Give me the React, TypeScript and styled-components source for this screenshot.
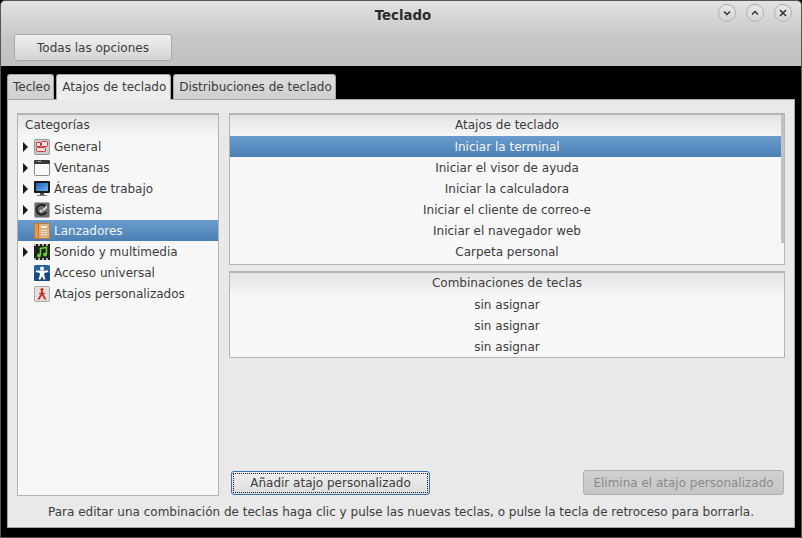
import React from 'react';
import styled, { createGlobalStyle } from 'styled-components';

const Global = createGlobalStyle`
  html, body { margin: 0; padding: 0; background: #000; }
  body { font-family: "DejaVu Sans", sans-serif; font-size: 12px; color: #3c3c3c; }
`;

const Win = styled.div`
  width: 802px;
  height: 538px;
  box-sizing: border-box;
  display: flex;
  flex-direction: column;
  background: #000;
  border: 1px solid #555;
  border-bottom-color: #4a4a4a;
  border-radius: 5px 5px 0 0;
  overflow: hidden;
`;

const Head = styled.div`
  height: 65px;
  flex: none;
  background: linear-gradient(#e2e2e2, #c6c6c6 60%, #c0c0c0);
  display: flex;
  flex-direction: column;
`;

const TitleBar = styled.div`
  height: 33px;
  position: relative;
  display: flex;
  align-items: center;
  justify-content: center;
`;

const Title = styled.div`
  font-weight: bold;
  font-size: 13.3px;
  color: #2c2c2c;
  margin: -4px 0 0 4px;
`;

const WinButtons = styled.div`
  position: absolute;
  right: 9px;
  top: 3px;
  display: flex;
  gap: 10px;
`;

const WinButton = styled.div`
  width: 16px;
  height: 16px;
  border-radius: 50%;
  border: 1px solid #b0b0b0;
  background: linear-gradient(#e8e8e8, #d4d4d4);
  box-shadow: 0 0 0 1px #d8d8d8;
  display: flex;
  align-items: center;
  justify-content: center;
`;

const Toolbar = styled.div`
  padding: 0 13px 0;
`;

const TopButton = styled.div`
  width: 158px;
  height: 27px;
  box-sizing: border-box;
  border: 1px solid #a8a8a8;
  border-radius: 3px;
  background: linear-gradient(#f0f0f0, #d4d4d4);
  display: flex;
  align-items: center;
  justify-content: center;
`;

const Body = styled.div`
  flex: 1;
  padding: 8px 6px 9px 6px;
  display: flex;
  flex-direction: column;
  min-height: 0;
`;

const Tabs = styled.div`
  display: flex;
  height: 25px;
  flex: none;
  gap: 2px;
`;

const Tab = styled.div<{ $on?: boolean }>`
  box-sizing: border-box;
  height: 25px;
  padding: 0 ${p => (p.$on ? '4px' : '3px')} 1px 5px;
  display: flex;
  align-items: center;
  border: 1px solid #a5a5a5;
  border-bottom: none;
  border-radius: 3px 3px 0 0;
  background: ${p => (p.$on ? '#ececec' : 'linear-gradient(#dedede, #cfcfcf)')};
  ${p => p.$on && 'position: relative; z-index: 1; height: 26px;'}
`;

const Panel = styled.div`
  flex: 1;
  background: #e9e9e9;
  border: 1px solid #a5a5a5;
  padding: 13px 9px 4px 9px;
  display: flex;
  flex-direction: column;
  min-height: 0;
`;

const Columns = styled.div`
  flex: none;
  height: 383px;
  display: flex;
  gap: 10px;
`;

const ListBox = styled.div`
  box-sizing: border-box;
  background: #f7f7f7;
  border: 1px solid #b4b4b4;
  border-top: 2px solid #b4b4b4;
  flex: none;
`;

const Side = styled(ListBox)`
  width: 202px;
  height: 383px;
`;

const Right = styled.div`
  flex: 1;
  display: flex;
  flex-direction: column;
  gap: 6px;
  min-width: 0;
`;

const HeadCell = styled.div<{ $left?: boolean }>`
  height: 21px;
  box-sizing: border-box;
  padding-bottom: 2px;
  display: flex;
  align-items: center;
  justify-content: ${p => (p.$left ? 'flex-start' : 'center')};
  padding-left: ${p => (p.$left ? '7px' : '0')};
  background: linear-gradient(#e4e4e4, #f5f5f5);
`;

const Row = styled.div<{ $sel?: boolean }>`
  height: 21px;
  display: flex;
  align-items: center;
  justify-content: center;
  color: ${p => (p.$sel ? '#f4f4f4' : '#3c3c3c')};
  background: ${p => (p.$sel ? 'linear-gradient(#6a9cce, #4a7fb4)' : 'transparent')};
`;

const CatRow = styled(Row)`
  justify-content: flex-start;
`;

const ArrowSlot = styled.div`
  width: 16px;
  box-sizing: border-box;
  flex: none;
  display: flex;
  padding-left: 5px;
`;

const Arrow = styled.div`
  width: 0;
  height: 0;
  border-left: 5px solid #1a1a1a;
  border-top: 5px solid transparent;
  border-bottom: 5px solid transparent;
`;

const CatLabel = styled.span`
  margin-left: 4px;
`;

const TopList = styled(ListBox)`
  height: 152px;
  position: relative;
  overflow: hidden;
`;

const Scrollbar = styled.div`
  position: absolute;
  right: 0;
  top: 0;
  width: 3px;
  height: 128px;
  background: #c2c2c2;
`;

const ComboList = styled(ListBox)`
  height: 87px;
`;

const Spacer = styled.div`
  flex: 1;
`;

const Actions = styled.div`
  display: flex;
  justify-content: space-between;
  padding: 0 1px 1px 2px;
`;

const FocusButton = styled.div`
  width: 199px;
  height: 24px;
  margin-top: 1px;
  box-sizing: border-box;
  border: 1px solid #3a72b0;
  border-radius: 3px;
  background: linear-gradient(#f0f0f0, #dcdcdc);
  padding: 1px;
  display: flex;
`;

const FocusInner = styled.div`
  flex: 1;
  border: 1px dotted #222;
  display: flex;
  align-items: center;
  justify-content: center;
`;

const OffButton = styled.div`
  width: 201px;
  height: 25px;
  box-sizing: border-box;
  border: 1px solid #b0b0b0;
  border-radius: 3px;
  background: linear-gradient(#d0d0d0, #c6c6c6);
  color: #8a8a8a;
  display: flex;
  align-items: center;
  justify-content: center;
`;

const Hint = styled.div`
  height: 22px;
  margin-top: 5px;
  display: flex;
  align-items: center;
  justify-content: center;
`;

const I = ({ children }: { children: React.ReactNode }) => (
  <svg width="16" height="16" viewBox="0 0 16 16" style={{ flex: 'none' }}>{children}</svg>
);

const icons: Record<string, React.ReactNode> = {
  general: (
    <I>
      <rect x=".5" y=".5" width="15" height="15" rx="1.5" fill="#cfccc9" stroke="#9a9a9a" />
      <rect x="7.5" y="2.5" width="6" height="5" rx="1" fill="#e8e4e2" stroke="#c8383a" />
      <rect x="2.5" y="3.5" width="4" height="4" rx=".5" fill="#e8e4e2" stroke="#c8383a" />
      <rect x="2.5" y="8.5" width="9" height="4" rx="1" fill="#f5d8d8" stroke="#c8383a" />
    </I>
  ),
  ventanas: (
    <I>
      <rect x=".5" y=".5" width="15" height="15" rx="1" fill="#fbfbfb" stroke="#8a8a8a" />
      <rect x="0" y="0" width="16" height="4" rx="1" fill="#3a3a3a" />
      <rect x="2" y="1" width="1" height="1" fill="#d05050" />
      <rect x="4" y="1" width="3" height="1" fill="#aaa" />
    </I>
  ),
  areas: (
    <I>
      <defs>
        <linearGradient id="screenBlue" x1="0" y1="0" x2="1" y2="1">
          <stop offset="0" stopColor="#1c5fb8" />
          <stop offset="1" stopColor="#6fb0ea" />
        </linearGradient>
      </defs>
      <rect x="0" y="0" width="16" height="12" rx="1" fill="#1a1a1a" />
      <rect x="2" y="2" width="12" height="8" fill="url(#screenBlue)" />
      <rect x="6" y="12" width="4" height="2" fill="#555" />
      <rect x="3" y="14" width="10" height="1" fill="#777" />
    </I>
  ),
  sistema: (
    <I>
      <rect x=".5" y=".5" width="15" height="15" rx="1.5" fill="#6c6c6c" stroke="#a8a8a8" />
      <path d="M11.500 4.500A5 5 0 1 0 12 10" fill="none" stroke="#222" strokeWidth="2" />
      <path d="M8 8l5-5v3l-3 3z" fill="#d8d8d8" />
      <circle cx="7" cy="9" r="1.500" fill="#ccc" />
    </I>
  ),
  lanzadores: (
    <I>
      <rect x="0" y="0" width="16" height="16" rx="1" fill="#c87a34" />
      <rect x="1" y="1" width="3" height="14" fill="#e29a50" />
      <rect x="5" y="1" width="10" height="14" fill="#d9b186" />
      <rect x="7" y="3" width="6" height="2" fill="#f0ece4" />
      <path d="M7 7.500h6M7 9.500h6M7 11.500h6" stroke="#f0ece4" strokeDasharray="1.500 .75" />
    </I>
  ),
  sonido: (
    <I>
      <rect x="0" y="0" width="16" height="16" fill="#1e241c" />
      <path d="M0 1h16M0 15h16" stroke="#e0e0e0" strokeDasharray="2 2" strokeWidth="1.500" />
      <path d="M6.500 11V4.500l6-1V10" fill="none" stroke="#6fd038" strokeWidth="1.500" />
      <circle cx="5" cy="11.500" r="1.900" fill="#6fd038" />
      <circle cx="11" cy="10.500" r="1.900" fill="#6fd038" />
    </I>
  ),
  acceso: (
    <I>
      <rect x="0" y="0" width="16" height="16" rx="1.500" fill="#22639f" />
      <rect x="0" y="8" width="16" height="8" rx="1.500" fill="#17497c" />
      <circle cx="8" cy="3.500" r="2" fill="#fff" />
      <path d="M2 5.500h12v1.600l-3.800 1V10l1.300 4.500H9.500L8 11l-1.500 3.500H4.500L5.800 10V8.100L2 7.100z" fill="#fff" />
    </I>
  ),
  atajos: (
    <I>
      <rect x=".5" y=".5" width="15" height="15" rx="1.500" fill="#e2dfdc" stroke="#aaa" />
      <circle cx="8" cy="3.500" r="1.600" fill="#c9302c" />
      <path d="M7 5h2l.5 3 3 5.500h-2L8 9.500 5.500 13.500h-2l3-5.500z" fill="#c9302c" />
      <rect x="5" y="7" width="6" height="1" fill="#c9302c" />
    </I>
  ),
};

const categories = [
  { name: 'General', icon: 'general', arrow: true },
  { name: 'Ventanas', icon: 'ventanas', arrow: true },
  { name: 'Áreas de trabajo', icon: 'areas', arrow: true },
  { name: 'Sistema', icon: 'sistema', arrow: true },
  { name: 'Lanzadores', icon: 'lanzadores', sel: true },
  { name: 'Sonido y multimedia', icon: 'sonido', arrow: true },
  { name: 'Acceso universal', icon: 'acceso' },
  { name: 'Atajos personalizados', icon: 'atajos' },
];

const shortcuts = [
  'Iniciar la terminal',
  'Iniciar el visor de ayuda',
  'Iniciar la calculadora',
  'Iniciar el cliente de correo-e',
  'Iniciar el navegador web',
  'Carpeta personal',
];

export default function App() {
  return (
    <Win>
      <Global />
      <Head>
        <TitleBar>
          <Title>Teclado</Title>
          <WinButtons>
            <WinButton>
              <svg width="10" height="10" viewBox="0 0 10 10"><path d="M2 3.500l3 3 3-3" fill="none" stroke="#333" strokeWidth="1.500" /></svg>
            </WinButton>
            <WinButton>
              <svg width="10" height="10" viewBox="0 0 10 10"><path d="M2 6.500l3-3 3 3" fill="none" stroke="#333" strokeWidth="1.500" /></svg>
            </WinButton>
            <WinButton>
              <svg width="10" height="10" viewBox="0 0 10 10"><path d="M2 2l6 6M8 2l-6 6" fill="none" stroke="#333" strokeWidth="1.600" /></svg>
            </WinButton>
          </WinButtons>
        </TitleBar>
        <Toolbar>
          <TopButton>Todas las opciones</TopButton>
        </Toolbar>
      </Head>
      <Body>
        <Tabs>
          <Tab>Tecleo</Tab>
          <Tab $on>Atajos de teclado</Tab>
          <Tab>Distribuciones de teclado</Tab>
        </Tabs>
        <Panel>
          <Columns>
            <Side>
              <HeadCell $left>Categorías</HeadCell>
              {categories.map(c => (
                <CatRow key={c.name} $sel={c.sel}>
                  <ArrowSlot>{c.arrow && <Arrow />}</ArrowSlot>
                  {icons[c.icon]}
                  <CatLabel>{c.name}</CatLabel>
                </CatRow>
              ))}
            </Side>
            <Right>
              <TopList>
                <HeadCell>Atajos de teclado</HeadCell>
                {shortcuts.map((s, i) => (
                  <Row key={s} $sel={i === 0}>{s}</Row>
                ))}
                <Scrollbar />
              </TopList>
              <ComboList>
                <HeadCell>Combinaciones de teclas</HeadCell>
                <Row>sin asignar</Row>
                <Row>sin asignar</Row>
                <Row>sin asignar</Row>
              </ComboList>
              <Spacer />
              <Actions>
                <FocusButton><FocusInner>Añadir atajo personalizado</FocusInner></FocusButton>
                <OffButton>Elimina el atajo personalizado</OffButton>
              </Actions>
            </Right>
          </Columns>
          <Hint>Para editar una combinación de teclas haga clic y pulse las nuevas teclas, o pulse la tecla de retroceso para borrarla.</Hint>
        </Panel>
      </Body>
    </Win>
  );
}
